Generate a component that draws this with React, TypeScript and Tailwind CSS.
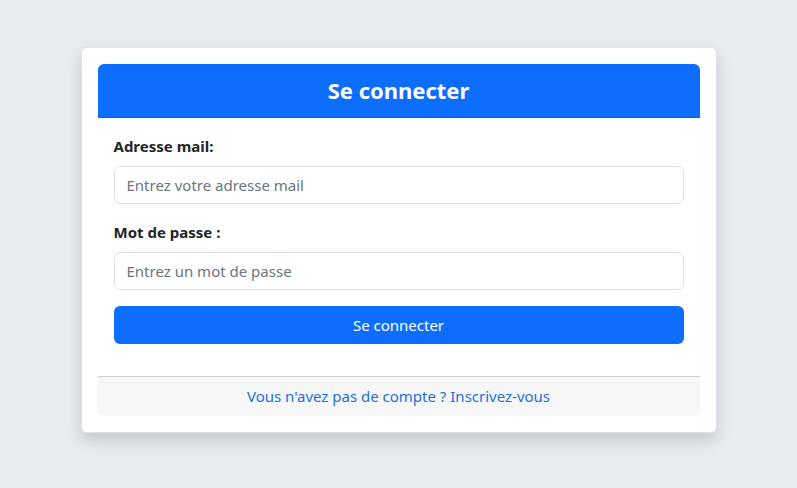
const App = () => {
    return (
        <div className="min-h-screen bg-[#e9ecef] pt-[47px] font-['Noto_Sans','Open_Sans',sans-serif]">
            <div className="mx-auto w-[636px] bg-white rounded-md border border-[#dee2e6] shadow-[0_8px_16px_rgba(0,0,0,0.15)] p-4">
                <div className="h-[54px] bg-[#0d6efd] rounded-t-md border-b border-[#0b5ed7] flex items-center justify-center">
                    <h1 className="text-white text-[22px] font-bold">Se connecter</h1>
                </div>

                <div className="p-4 pb-8">
                    <div className="flex flex-col">
                        <label htmlFor="email" className="font-bold text-[15px] text-[#212529] leading-6 mb-2">Adresse mail:</label>
                        <input id="email" type="email" placeholder="Entrez votre adresse mail"
                            className="h-[38px] px-3 border border-[#dee2e6] rounded-md text-[15px] text-[#212529] placeholder:text-[#6c757d] outline-none" />
                    </div>

                    <div className="flex flex-col mt-4">
                        <label htmlFor="password" className="font-bold text-[15px] text-[#212529] leading-6 mb-2">Mot de passe :</label>
                        <input id="password" type="password" placeholder="Entrez un mot de passe"
                            className="h-[38px] px-3 border border-[#dee2e6] rounded-md text-[15px] text-[#212529] placeholder:text-[#6c757d] outline-none" />
                    </div>

                    <button className="w-full h-[38px] mt-4 bg-[#0d6efd] text-white rounded-md text-[15px]">Se connecter</button>
                </div>

                <div className="h-10 bg-[#f7f7f7] border-t border-[#cfcfcf] flex items-center justify-center rounded-b-md">
                    <a href="#" className="text-[#1c6fe0] text-[15px]">Vous n'avez pas de compte ? Inscrivez-vous</a>
                </div>
            </div>
        </div>
    )
}

export default App
